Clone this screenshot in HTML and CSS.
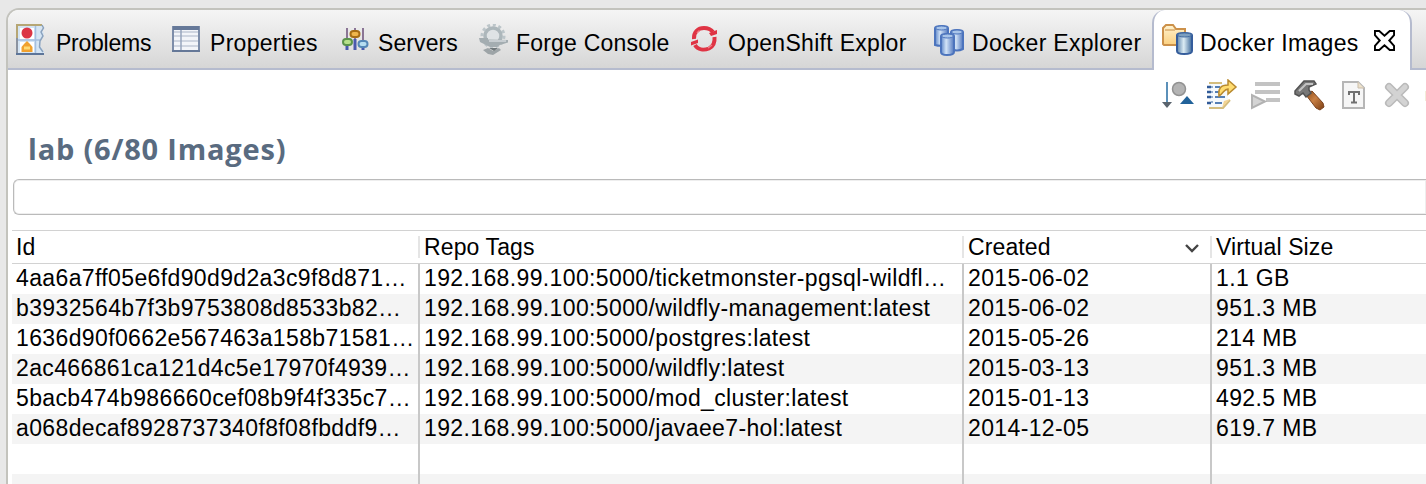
FILE: index.html
```html
<!DOCTYPE html>
<html lang="en">
<head>
<meta charset="utf-8">
<title>Docker Images</title>
<link rel="stylesheet" href="styles.css">
</head>
<body>
<svg width="0" height="0" class="defs">
  <defs>
    <linearGradient id="cyl"><stop offset="0" stop-color="#5c85c8"/><stop offset=".4" stop-color="#d3e4f7"/><stop offset="1" stop-color="#5278bf"/></linearGradient>
    <linearGradient id="cyl2"><stop offset="0" stop-color="#6086ac"/><stop offset=".45" stop-color="#dcecf4"/><stop offset="1" stop-color="#3c6899"/></linearGradient>
    <linearGradient id="folder" x2="0" y2="1"><stop offset="0" stop-color="#fff3d0"/><stop offset="1" stop-color="#fbd080"/></linearGradient>
    <linearGradient id="handle" y2="1"><stop offset="0" stop-color="#8a4a17"/><stop offset=".45" stop-color="#c98045"/><stop offset="1" stop-color="#7a3d12"/></linearGradient>
  </defs>
</svg>
<div class="view">
  <div class="tabs">
    <div class="tab problems">
      <svg class="icon" viewBox="0 0 30 32"><path d="M1 1H27L25 6L28 9L25 15L23 20L28 28V30H1Z" fill="#d5e5f4"/><rect x="4" y="4" width="14" height="11" fill="#fff"/><rect x="4" y="18" width="14" height="10" fill="#fff"/><path d="M1 30V1H26" fill="none" stroke="#b6a674" stroke-width="2"/><path d="M1 14V30" stroke="#8b93a0" stroke-width="2"/><path d="M2 16H24M19.500 2V29" fill="none" stroke="#a4bfe0" stroke-width="1.500"/><path d="M26 1L27.500 4L25 8L27 12L24 17L23.500 23L27 28" fill="none" stroke="#8ba3bf" stroke-width="1.500"/><path d="M0 30H28" stroke="#5d7599" stroke-width="2"/><circle cx="11" cy="9" r="5.500" fill="#dc3545"/><path d="M5.500 28V23L8 20L11 17L14 20L16.500 23V28Z" fill="#f0a12f"/><path d="M8 24H14" stroke="#ffda73" stroke-width="3"/></svg>
      <span>Problems</span>
    </div>
    <div class="tab properties">
      <svg class="icon" viewBox="0 0 30 32"><rect x="1" y="3" width="26" height="24" fill="#f3f5f9" stroke="#7d8da9" stroke-width="2"/><path d="M1 4H27" stroke="#657898" stroke-width="4"/><path d="M2 8H26M2 12H26M2 17H26M2 22H26" stroke="#c3cad8" stroke-width="1.5"/><path d="M9 6V27" stroke="#97a4bd" stroke-width="1.5"/><path d="M0 27H28" stroke="#657898" stroke-width="2"/></svg>
      <span>Properties</span>
    </div>
    <div class="tab servers">
      <svg class="icon" viewBox="0 0 30 32"><path d="M5 4V26M21 4V26M13 4V26" stroke="#8a7595" stroke-width="2"/><path d="M5 19V26M13 15V26M21 21V26" stroke="#4959ad" stroke-width="3"/><rect x="1" y="15" width="9" height="6" rx="3" fill="#b7e18a" stroke="#5b934b" stroke-width="2"/><rect x="8.500" y="7" width="9" height="6" rx="3" fill="#efb64d" stroke="#a66d16" stroke-width="2"/><rect x="16.500" y="17" width="9" height="6" rx="3" fill="#b7ddf0" stroke="#5586b6" stroke-width="2"/></svg>
      <span>Servers</span>
    </div>
    <div class="tab forge">
      <svg class="icon" viewBox="0 0 30 32"><circle cx="15" cy="12" r="11" fill="none" stroke="#bcc5c9" stroke-width="3" stroke-dasharray="3 2.700"/><circle cx="15" cy="12" r="8" fill="#dfe3e5" stroke="#adb7bb" stroke-width="3.500"/><path d="M1 14H10V15.500L30 16V18.500L22 21L19 23H12L8 21L2 18Z" fill="#a4adb1"/><path d="M11 17H28" stroke="#d3d9dc" stroke-width="1.500"/><path d="M5 26L10 24L15 27L21 24L23 26L15 31L10 30Z" fill="#9da4a7"/><path d="M11 24H20L16 27Z" fill="#70787b"/></svg>
      <span>Forge Console</span>
    </div>
    <div class="tab openshift">
      <svg class="icon" viewBox="0 0 30 32"><path d="M4 15C3.500 8 8 4 14 4C18 4 21 5.500 23 8" fill="none" stroke="#df3444" stroke-width="4"/><path d="M5 21C8 26 14 26.500 19 24.500C23 22.500 25 18 24.500 13" fill="none" stroke="#df3444" stroke-width="4"/><path d="M19 9L27 6V10L21 12ZM1 18L8 15.500V19L1 21.500Z" fill="#df3444"/><path d="M7 9L9.500 6.500M18 24L22 21" stroke="#f08088" stroke-width="1.500"/></svg>
      <span>OpenShift Explor</span>
    </div>
    <div class="tab explorer">
      <svg class="icon wide" viewBox="0 0 32 32"><g fill="url(#cyl)" stroke="#4c74bd" stroke-width="2"><path d="M2 4Q2 2 9 2Q15 2 15 4V20Q9 23 2 21Z"/><path d="M18 8Q18 6 24 6Q30 6 30 8V25Q24 28 18 25Z"/><path d="M8 12Q8 10 14 10Q21 10 21 12V28Q21 31 14 31Q8 31 8 28Z"/></g><g fill="#a9c5e9" stroke="#4c74bd" stroke-width="1"><ellipse cx="8.500" cy="4" rx="6" ry="2"/><ellipse cx="24" cy="8" rx="5.500" ry="2"/><ellipse cx="14.500" cy="12" rx="6" ry="2"/></g></svg>
      <span>Docker Explorer</span>
    </div>
    <div class="tab images active">
      <svg class="icon wide" viewBox="0 0 32 32"><path d="M1 20V4L4 1H11L14 5H23V21H2Z" fill="url(#folder)" stroke="#cc914a" stroke-width="2"/><path d="M3 6H13" stroke="#d9ab6c" stroke-width="1.500"/><path d="M15 11Q15 9 22 9Q30 9 30 11V27Q30 30 22 30Q15 30 15 27Z" fill="url(#cyl2)" stroke="#355d9c" stroke-width="2"/><ellipse cx="22.500" cy="11" rx="7" ry="2" fill="#7c9fc0" stroke="#426ba1"/></svg>
      <span>Docker Images</span>
      <svg class="close" viewBox="0 0 22 22"><path d="M1 1H5.500L11 6L16.500 1H21V5.500L16 11L21 16.500V21H16.500L11 16L5.500 21H1V16.500L6 11L1 5.500Z" fill="#fff" stroke="#000" stroke-width="2"/></svg>
    </div>
  </div>
  <div class="toolbar">
    <svg class="tool" viewBox="0 0 32 32"><path d="M5 3V25" stroke="#5b90b9" stroke-width="2"/><path d="M0 23H10L5 29Z" fill="#59636d"/><circle cx="17" cy="10" r="6.500" fill="#b4b4b4" stroke="#929292" stroke-width="1.500"/><path d="M18 25L25 17L32 25Z" fill="#21629a"/></svg>
    <svg class="tool" viewBox="0 0 32 32"><path d="M3 4H22V22L16 29H3Z" fill="#f5f9fc"/><path d="M3 4H16M3 29H17L24 21" fill="none" stroke="#d4bd7d" stroke-width="2"/><path d="M16 29L18 22L24 20Z" fill="#f3d493"/><path d="M9 8H14M9 13H13M9 18H19M9 24H16" stroke="#557fb4" stroke-width="2"/><path d="M1 8H5M1 13H5M1 18H5M1 24H5" stroke="#325b98" stroke-width="2.500"/><path d="M6 7V26" stroke="#7294c2" stroke-width="1.500" stroke-dasharray="2 3"/><path d="M13 17C12 9 15 6 22 6V1L30 8L22 15V10C18 10 18 14 13 17Z" fill="#ffdc70" stroke="#b98a30" stroke-width="1.500"/></svg>
    <svg class="tool" viewBox="0 0 32 32"><path d="M5 5H30M5 13H30M16 21H30" stroke="#c3c3c3" stroke-width="4"/><path d="M2 16V29L15 22.500Z" fill="#d4d4d4" stroke="#b2b2b2" stroke-width="2"/></svg>
    <svg class="tool" viewBox="0 0 32 32"><path d="M12 16L18 12L29 24L30 28L26 31L22 29Z" fill="url(#handle)" stroke="#7a4320"/><path d="M1 12L10 2H20L22 5L15 8V11L17 14L12 18L9 14L5 17L1 15Z" fill="#777" stroke="#535353" stroke-width="1.500"/><path d="M5 12L12 5H19" fill="none" stroke="#c2c2c2" stroke-width="2"/></svg>
    <svg class="tool" viewBox="0 0 32 32"><path d="M5 3H20L26 9V29H5Z" fill="#f6f6f6" stroke="#b6b6b6" stroke-width="2"/><path d="M20 3V9H26" fill="#eee2cb" stroke="#c9bcaa"/><path d="M11 16V13H21V16M16 13V23M13 23.500H19" fill="none" stroke="#707070" stroke-width="2"/></svg>
    <svg class="tool" viewBox="0 0 32 32"><path d="M7 8L23 24M23 8L7 24" stroke="#bababa" stroke-width="8" stroke-linecap="round"/><path d="M7 8L23 24M23 8L7 24" stroke="#d3d3d3" stroke-width="5" stroke-linecap="round"/></svg>
    <i class="edge"></i>
  </div>
  <h1>lab (6/80 Images)</h1>
  <div class="search"></div>
  <div class="table">
    <div class="row head"><div>Id</div><div>Repo Tags</div><div>Created<svg class="sort" viewBox="0 0 16 10"><path d="M2 2L8 8L14 2" fill="none" stroke="#444" stroke-width="2.400"/></svg></div><div>Virtual Size</div></div>
    <div class="row"><div>4aa6a7ff05e6fd90d9d2a3c9f8d871…</div><div>192.168.99.100:5000/ticketmonster-pgsql-wildfl…</div><div>2015-06-02</div><div>1.1 GB</div></div>
    <div class="row"><div>b3932564b7f3b9753808d8533b82…</div><div>192.168.99.100:5000/wildfly-management:latest</div><div>2015-06-02</div><div>951.3 MB</div></div>
    <div class="row"><div>1636d90f0662e567463a158b71581…</div><div>192.168.99.100:5000/postgres:latest</div><div>2015-05-26</div><div>214 MB</div></div>
    <div class="row"><div>2ac466861ca121d4c5e17970f4939…</div><div>192.168.99.100:5000/wildfly:latest</div><div>2015-03-13</div><div>951.3 MB</div></div>
    <div class="row"><div>5bacb474b986660cef08b9f4f335c7…</div><div>192.168.99.100:5000/mod_cluster:latest</div><div>2015-01-13</div><div>492.5 MB</div></div>
    <div class="row"><div>a068decaf8928737340f8f08fbddf9…</div><div>192.168.99.100:5000/javaee7-hol:latest</div><div>2014-12-05</div><div>619.7 MB</div></div>
    <div class="row"><div></div><div></div><div></div><div></div></div>
    <div class="row"><div></div><div></div><div></div><div></div></div>
  </div>
</div>
</body>
</html>
```
FILE: styles.css
```css
* { box-sizing: border-box; }
body {
  margin: 0;
  height: 484px;
  overflow: hidden;
  padding: 8px 0 0 6px;
  background: #e8e8e8;
  color: #000;
  font: 23px "Liberation Sans", Arial, sans-serif;
  letter-spacing: 0.37px;
}
.defs { position: absolute; }
.view {
  height: 490px;
  border: 2px solid #c3c3bd;
  border-right: 0;
  border-radius: 13px 0 0 0;
  background: #fff;
  overflow: hidden;
}
.tabs {
  display: flex;
  height: 60px;
  background: linear-gradient(#f5f5f5, #d6d6d6);
  border-bottom: 2px solid #b5bbce;
}
.tab {
  display: flex;
  flex: none;
  align-items: flex-start;
  padding: 14px 0 0 8px;
  white-space: nowrap;
  letter-spacing: 0.3px;
}
.tab span { line-height: 26px; margin-top: 6px; }
.icon { flex: none; width: 30px; height: 32px; }
.icon.wide { width: 32px; }
.problems { width: 156px; gap: 10px; letter-spacing: -0.25px; }
.properties { width: 170px; gap: 8px; }
.servers { width: 136px; gap: 6px; letter-spacing: 0.1px; }
.forge { width: 212px; gap: 8px; letter-spacing: 0.2px; }
.openshift { width: 243px; gap: 8px; }
.explorer { width: 227px; gap: 7px; }
.active {
  width: 260px;
  height: 60px;
  gap: 6px;
  background: #fff;
  border: 2px solid #b5bbce;
  border-width: 0 2px;
  border-radius: 13px 13px 0 0;
}
.close { width: 21px; height: 21px; margin: 6px 0 0 9px; }
.toolbar {
  display: flex;
  justify-content: flex-end;
  gap: 12px;
  height: 52px;
  padding: 9px 0 0;
}
.tool { width: 32px; height: 32px; }
.edge { width: 1px; height: 10px; margin: 12px 0 0 -1px; background: #f3edda; }
h1 {
  height: 57px;
  margin: 0;
  padding: 9px 0 0 20px;
  color: #596b80;
  font: bold 29px/36px "Open Sans", "Noto Sans", sans-serif;
  letter-spacing: 0.8px;
}
.search {
  height: 36px;
  margin-left: 5px;
  border: 1px solid #bababa;
  border-right: 0;
  border-radius: 6px 0 0 6px;
  box-shadow: inset 0 0 0 1px #eee;
}
.table { margin: 15px 0 0 4px; }
.row {
  display: grid;
  grid-template-columns: 408px 544px 248px 1fr;
  height: 30px;
  line-height: 29px;
}
.row:nth-child(odd) { background: #f4f4f4; }
.row > div {
  padding-left: 4px;
  border-right: 2px solid #c8c8c8;
  white-space: nowrap;
}
.row > div:last-child { border: 0; }
.row.head {
  height: 34px;
  padding: 5px 0;
  border: 1px solid #d2d2d2;
  border-width: 1px 0;
  background: #fff;
  line-height: 22px;
  letter-spacing: 0.12px;
}
.head > div { border-color: #e5e5e5; }
.head > div:nth-child(3) { display: flex; justify-content: space-between; }
.sort { width: 16px; height: 10px; margin: 7px 10px 0 0; }
```
